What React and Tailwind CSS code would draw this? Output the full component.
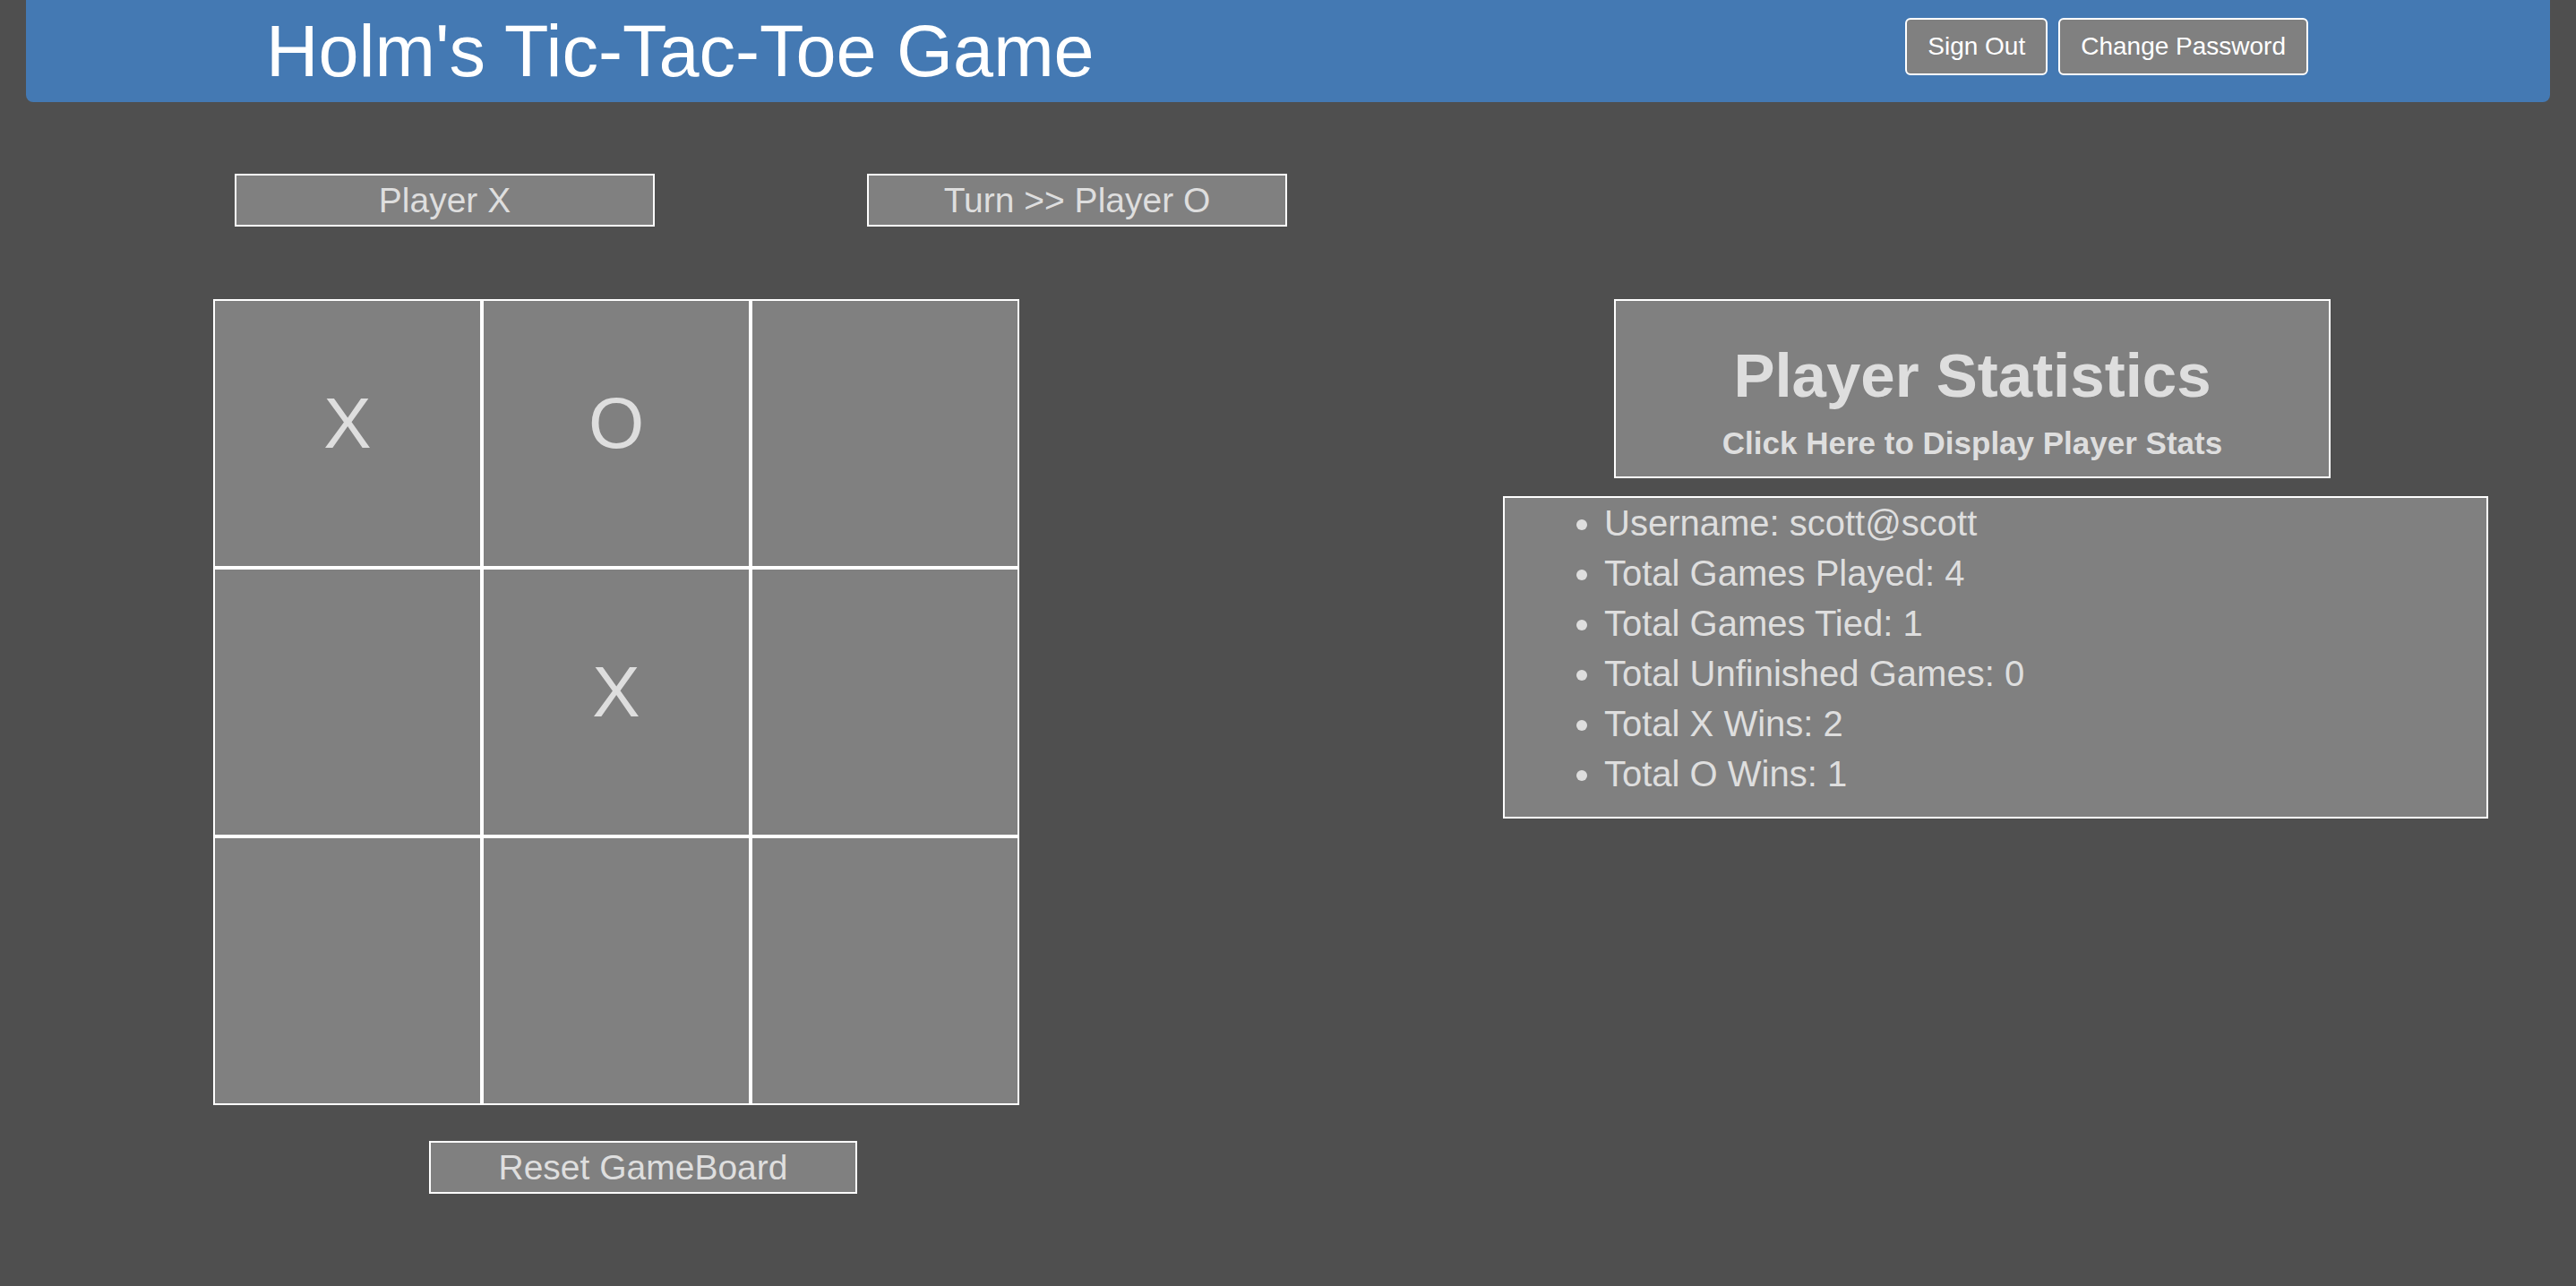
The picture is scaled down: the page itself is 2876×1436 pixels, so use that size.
import React from 'react';

const board = ['X', 'O', '', '', 'X', '', '', '', ''];

const stats = [
    'Username: scott@scott',
    'Total Games Played: 4',
    'Total Games Tied: 1',
    'Total Unfinished Games: 0',
    'Total X Wins: 2',
    'Total O Wins: 1',
];

function App() {
    return (
        <div className='min-h-screen w-full bg-[#4f4f4f] text-[#dedede]' style={{ fontFamily: '"Liberation Sans", Arial, sans-serif' }}>

            {/* ---------- header ---------- */}
            <header className='mx-[29px] h-[114px] rounded-b-[8px] bg-[#4479b3] flex items-start'>
                <div className='h-full flex items-center pl-[268px]'>
                    <h1 className='text-[81px] leading-none text-white font-normal'>Holm's Tic-Tac-Toe Game</h1>
                </div>
                <div className='ml-auto mr-[270px] mt-[20px] flex gap-[12px]'>
                    <button className='h-[64px] px-[23px] rounded-[6px] border-2 border-white bg-[#808080] text-white text-[28px]'>Sign Out</button>
                    <button className='h-[64px] px-[23px] rounded-[6px] border-2 border-white bg-[#808080] text-white text-[28px]'>Change Password</button>
                </div>
            </header>

            <div className='flex items-start pt-[80px]'>

                {/* ---------- game column ---------- */}
                <div className='ml-[238px] w-[1200px] flex flex-col'>
                    <div className='flex gap-[237px] pl-[24px]'>
                        <div className='w-[469px] h-[59px] border-2 border-white bg-[#808080] flex items-center justify-center text-[39px] leading-none'>Player X</div>
                        <div className='w-[469px] h-[59px] border-2 border-white bg-[#808080] flex items-center justify-center text-[39px] leading-none'>Turn &gt;&gt; Player O</div>
                    </div>

                    <div className='mt-[81px] grid grid-cols-[300px_300px_300px] w-[900px]'>
                        {board.map((mark, i) => (
                            <div key={i} className='h-[300px] border-2 border-white bg-[#808080] flex items-center justify-center pb-[22px] text-[80px] leading-none text-[#dedede]'>
                                {mark}
                            </div>
                        ))}
                    </div>

                    <div className='mt-[40px] ml-[241px] w-[478px] h-[59px] border-2 border-white bg-[#808080] flex items-center justify-center text-[39px] leading-none'>Reset GameBoard</div>
                </div>

                {/* ---------- stats column ---------- */}
                <div className='ml-[240px] mt-[140px] flex flex-col'>
                    <div className='ml-[124px] w-[800px] h-[200px] border-2 border-white bg-[#808080] pt-[49px] text-center font-bold'>
                        <h2 className='text-[69px] leading-none'>Player Statistics</h2>
                        <p className='mt-[23px] text-[35px] leading-none'>Click Here to Display Player Stats</p>
                    </div>

                    <div className='mt-[20px] w-[1100px] h-[360px] border-2 border-white bg-[#808080]'>
                        <ul className='list-disc pl-[111px] text-[40px] leading-[56px]'>
                            {stats.map((s) => (
                                <li key={s}>{s}</li>
                            ))}
                        </ul>
                    </div>
                </div>
            </div>
        </div>
    );
}

export default App;
